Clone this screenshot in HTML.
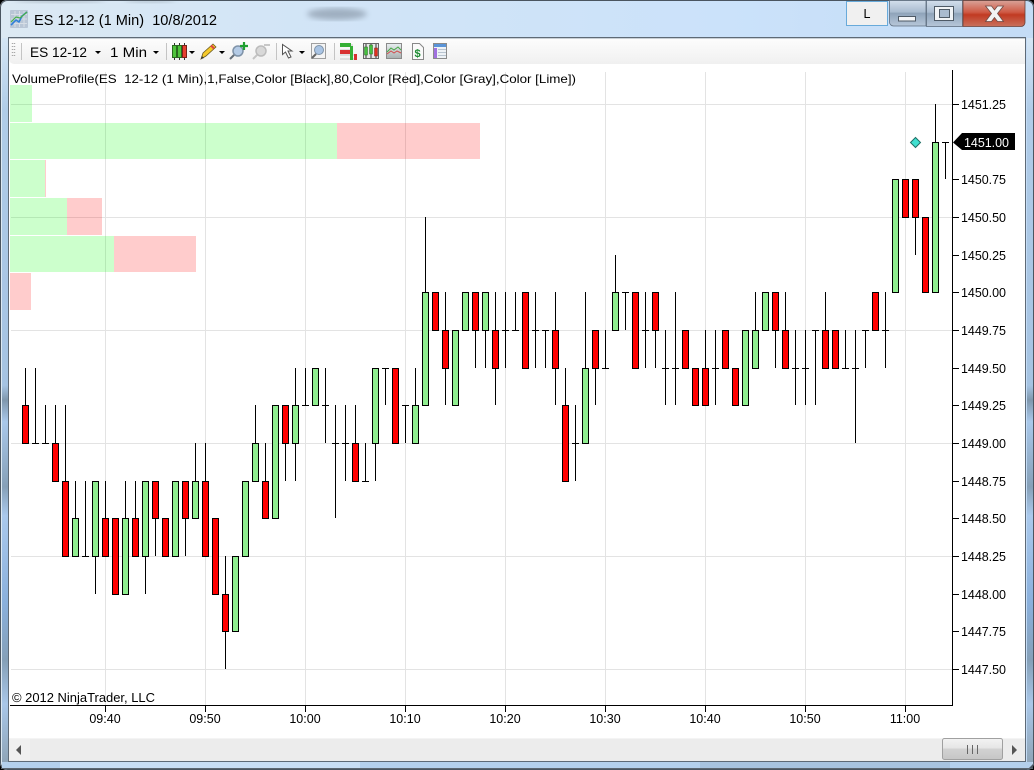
<!DOCTYPE html>
<html><head><meta charset="utf-8"><title>ES 12-12 (1 Min) 10/8/2012</title>
<style>
html,body{margin:0;padding:0;background:#000;overflow:hidden}
svg{display:block;font-family:"Liberation Sans",sans-serif}
text{white-space:pre}
</style></head><body>
<svg width="1034" height="770" viewBox="0 0 1034 770" xmlns="http://www.w3.org/2000/svg">
<defs>
<linearGradient id="tb" x1="0" y1="0" x2="0" y2="1"><stop offset="0" stop-color="#fdfdfd"/><stop offset="1" stop-color="#f0f0f0"/></linearGradient>
<linearGradient id="aero" x1="0" y1="0" x2="1" y2="0"><stop offset="0" stop-color="#dce9f3"/><stop offset=".25" stop-color="#d3e5f6"/><stop offset=".7" stop-color="#cbe2fa"/><stop offset="1" stop-color="#c4dcf6"/></linearGradient>
<linearGradient id="side" x1="0" y1="0" x2="0" y2="1"><stop offset="0" stop-color="#d5e6f5"/><stop offset=".1" stop-color="#b0cce8"/><stop offset=".48" stop-color="#a5c3e2"/><stop offset=".5" stop-color="#7f97ad"/><stop offset=".53" stop-color="#a9c8ea"/><stop offset=".62" stop-color="#86a0b8"/><stop offset=".66" stop-color="#aac9ec"/><stop offset=".78" stop-color="#8ab0dc"/><stop offset=".86" stop-color="#85a0b8"/><stop offset=".92" stop-color="#a9c7e8"/><stop offset="1" stop-color="#8fa5b8"/></linearGradient>
<linearGradient id="min" x1="0" y1="0" x2="0" y2="1"><stop offset="0" stop-color="#d3dfec"/><stop offset=".45" stop-color="#a9bbcf"/><stop offset=".5" stop-color="#8fa4ba"/><stop offset="1" stop-color="#b7c7d9"/></linearGradient>
<linearGradient id="cls" x1="0" y1="0" x2="0" y2="1"><stop offset="0" stop-color="#d9a298"/><stop offset=".45" stop-color="#cf5a45"/><stop offset=".55" stop-color="#c13a22"/><stop offset="1" stop-color="#c9705c"/></linearGradient>
<linearGradient id="thumb" x1="0" y1="0" x2="0" y2="1"><stop offset="0" stop-color="#f3f3f3"/><stop offset=".45" stop-color="#e6e6e6"/><stop offset=".5" stop-color="#d2d2d2"/><stop offset="1" stop-color="#c6c6c6"/></linearGradient>
<linearGradient id="gicon" x1="0" y1="0" x2="0" y2="1"><stop offset="0" stop-color="#e8eef0"/><stop offset="1" stop-color="#a8b0b0"/></linearGradient>
<filter id="blur"><feGaussianBlur stdDeviation="3"/></filter>
</defs>

<!-- window frame -->
<rect x="0" y="0" width="1034" height="770" rx="7" fill="url(#aero)"/>
<rect x="0.5" y="0.5" width="1033" height="769" rx="7" fill="none" stroke="#4a5560"/>
<rect x="2" y="38" width="6" height="724" fill="url(#side)"/>
<rect x="1027" y="38" width="6" height="724" fill="url(#side)"/>
<rect x="2" y="762" width="1030" height="6" fill="#b4d0ec"/>
<rect x="60" y="762" width="300" height="6" fill="#c8def4"/>
<rect x="700" y="762" width="250" height="6" fill="#a8c4e0"/>
<rect x="1" y="768" width="1032" height="1" fill="#5c6670"/>
<ellipse cx="337" cy="14" rx="30" ry="6" fill="#5a6676" opacity=".42" filter="url(#blur)"/>
<ellipse cx="60" cy="1" rx="45" ry="2" fill="#6a7680" opacity=".4" filter="url(#blur)"/>
<ellipse cx="150" cy="1" rx="25" ry="2" fill="#6a7680" opacity=".35" filter="url(#blur)"/>

<!-- title icon -->
<rect x="10" y="10" width="18" height="18" rx="1" fill="#b9c6d6"/>
<path d="M11 14.5h16M11 19h16M11 23.5h16M15 11v16M19.500 11v16M24 11v16" stroke="#d7dee6" stroke-width="1" fill="none"/>
<path d="M11 25l5-5 3 2 3-6 5-4" stroke="#2f7fd8" stroke-width="1.600" fill="none"/>
<path d="M11 22l5-5 4 1 7-6" stroke="#48b048" stroke-width="1.200" fill="none"/>
<text x="34" y="25" font-size="14.500" fill="#000" textLength="183" lengthAdjust="spacingAndGlyphs">ES 12-12 (1 Min)  10/8/2012</text>

<!-- caption buttons -->
<rect x="846.500" y="1.500" width="41" height="24" fill="#f0f0f0" stroke="#5fc9e8"/>
<rect x="846.500" y="1.500" width="41" height="24" fill="none" stroke="#7a70c0" stroke-opacity=".35"/>
<text x="867" y="18" font-size="12.500" text-anchor="middle" fill="#000">L</text>
<path d="M889.500 0.500V22a4 4 0 0 0 4 4H926V0.500z" fill="url(#min)" stroke="#5f6f80" stroke-width=".8"/>
<rect x="898.500" y="16.500" width="17" height="4.500" fill="#f4f6f8" stroke="#4e5a66"/>
<rect x="926.500" y="0.500" width="36" height="26" fill="url(#min)" stroke="#5f6f80" stroke-width=".8"/>
<rect x="934.500" y="6.500" width="19" height="14" fill="#f0f3f6" stroke="#4e5a66"/>
<rect x="939.500" y="9.500" width="10" height="8" fill="#a9bbcf" stroke="#4e5a66"/>
<path d="M963 0.500V26.500H1021a4 4 0 0 0 4-4V0.500z" fill="url(#cls)" stroke="#6a4038" stroke-width=".8"/>
<path d="M985.500 6h6l3 4 3-4h6l-6 7.500 6 8h-6l-3-4-3 4h-6l6-8z" fill="#f2f2f2" stroke="#6f4a44" stroke-width=".8"/>

<!-- client -->
<rect x="8.500" y="37.500" width="1017" height="724" fill="#fff" stroke="#5e6a76"/>
<path d="M9 38H1025V64H14a5 5 0 0 1-5-5z" fill="url(#tb)"/>
<path d="M9 38.500H1025" stroke="#c9d0d6"/>

<!-- toolbar -->
<path d="M12.500 43v1M12.500 46v1M12.500 49v1M12.500 52v1M12.500 55v1M14.500 43v1M14.500 46v1M14.500 49v1M14.500 52v1M14.500 55v1" stroke="#a8a8a8" stroke-width="1.400"/>
<path d="M21.500 43V60M166.500 43V60M276.500 43V60M334.500 43V60" stroke="#c4c4c4"/>
<text x="30" y="57" font-size="14" fill="#000" textLength="57" lengthAdjust="spacingAndGlyphs">ES 12-12</text>
<path d="M95 51h6l-3 3z" fill="#000"/>
<text x="110" y="57" font-size="14" fill="#000" textLength="37" lengthAdjust="spacingAndGlyphs">1 Min</text>
<path d="M153 51h6l-3 3z" fill="#000"/>

<!-- candle icon -->
<path d="M174.500 43v17M179.500 43v17M184.500 43v17" stroke="#333"/>
<rect x="172.500" y="45.500" width="4" height="12" fill="#4fc43c" stroke="#2a6a20"/>
<rect x="177.500" y="45.500" width="4" height="12" fill="#4fc43c" stroke="#2a6a20"/>
<rect x="182.500" y="45.500" width="4" height="12" fill="#e64030" stroke="#7a2218"/>
<path d="M189 51h6l-3 3z" fill="#000"/>
<!-- pencil -->
<path d="M201 59l2-6 10-9 3 3-10 9z" fill="#f5c92a" stroke="#6a5a20" stroke-width=".8"/>
<path d="M211 45.500l3 3" stroke="#d44" stroke-width="2"/>
<path d="M201 59l1-3 2 2z" fill="#333"/>
<path d="M219 51h6l-3 3z" fill="#000"/>
<!-- magnifier + -->
<circle cx="238" cy="51" r="5" fill="#b4cbe6" stroke="#7f93a8" stroke-width="1.500"/>
<path d="M234 55l-4 4" stroke="#66707a" stroke-width="2"/>
<path d="M244 42v8M240 46h8" stroke="#1fa030" stroke-width="2.200"/>
<!-- magnifier grey -->
<circle cx="261" cy="51" r="5" fill="#d8d8d8" stroke="#bcbcbc" stroke-width="1.500"/>
<path d="M257 55l-4 4" stroke="#c4c4c4" stroke-width="2"/>
<path d="M264 45h6" stroke="#c8c8c8" stroke-width="2"/>
<!-- arrow cursor -->
<path d="M282.500 44.500v10l3-2.500 3 6 2.500-1-3-6h4z" fill="#fff" stroke="#555"/>
<path d="M299 51h6l-3 3z" fill="#000"/>
<!-- boxed magnifier -->
<rect x="311.500" y="43.500" width="14" height="15" fill="#f4f4f4" stroke="#a0a0a0"/>
<circle cx="319" cy="50" r="4.500" fill="#a9c4e4" stroke="#7f93a8"/>
<path d="M316 54l-4 4" stroke="#666" stroke-width="2"/>
<!-- icon 1 -->
<path d="M340 45h13M340 50h10M340 55h16M340 59h16" stroke="#c8c8c8"/>
<rect x="340" y="43" width="11" height="4" fill="#35b035"/>
<rect x="340" y="50" width="10" height="4" fill="#d83030"/>
<rect x="350" y="46" width="3" height="14" fill="#35b035"/>
<rect x="354" y="54" width="3" height="6" fill="#d83030"/>
<!-- icon 2 -->
<rect x="363.500" y="43.500" width="15" height="15" fill="#e8e8e8" stroke="#666"/>
<path d="M366 44v14M371 44v14M376 44v14" stroke="#333"/>
<rect x="364.500" y="47" width="3" height="8" fill="#46c040" stroke="#2a6a20" stroke-width=".5"/>
<rect x="369.500" y="45" width="3" height="9" fill="#46c040" stroke="#2a6a20" stroke-width=".5"/>
<rect x="374.500" y="48" width="3" height="8" fill="#e03020" stroke="#7a2218" stroke-width=".5"/>
<!-- icon 3 -->
<rect x="386.500" y="43.500" width="15" height="15" fill="url(#gicon)" stroke="#8a8a8a"/>
<path d="M387 52l4-4 3 2 4-3 3 3" stroke="#45a845" fill="none"/>
<path d="M387 54l4-3 3 2 3-2 4 2" stroke="#d05050" fill="none"/>
<!-- icon 4 -->
<path d="M412.500 43.500h7l4 4v12h-11z" fill="#fafafa" stroke="#888"/>
<text x="417.500" y="57" font-size="11" font-weight="bold" text-anchor="middle" fill="#1a8a30">$</text>
<!-- icon 5 -->
<rect x="433.500" y="43.500" width="13" height="15" fill="#eef2f6" stroke="#8a8a8a"/>
<rect x="434" y="44" width="12" height="3" fill="#5a94d8"/>
<rect x="434" y="48" width="3" height="10" fill="#a070e0"/>
<path d="M438 49.500h8M438 52.500h8M438 55.500h8" stroke="#b8c4d0"/>

<!-- grid -->
<path d="M105.500 72V705M205.500 72V705M305.500 72V705M405.500 72V705M505.500 72V705M605.500 72V705M705.500 72V705M805.500 72V705M905.500 72V705" stroke="#e3e3e3"/>
<path d="M11 104.500H952M11 217.500H952M11 330.500H952M11 443.500H952M11 556.500H952M11 669.500H952" stroke="#e3e3e3"/>

<!-- volume profile -->
<g fill-opacity=".2">
<rect x="10" y="85" width="22" height="37" fill="#0f0"/>
<rect x="10" y="123" width="327" height="36" fill="#0f0"/>
<rect x="337" y="123" width="143" height="36" fill="#f00"/>
<rect x="10" y="160" width="35" height="37" fill="#0f0"/>
<rect x="45" y="160" width="1" height="37" fill="#f00"/>
<rect x="10" y="198" width="57" height="37" fill="#0f0"/>
<rect x="67" y="198" width="35" height="37" fill="#f00"/>
<rect x="10" y="236" width="104" height="36" fill="#0f0"/>
<rect x="114" y="236" width="82" height="36" fill="#f00"/>
<rect x="10" y="273" width="21" height="37" fill="#f00"/>
</g>

<!-- wicks -->
<path stroke="#000" stroke-width="1" fill="none" d="M25.500 368V406M35.500 368V444M45.500 405V444M55.500 405V444M65.500 405V482M75.500 481V519M85.500 481V557M95.500 556V594M105.500 481V519M125.500 481V519M135.500 481V519M145.500 556V594M155.500 518V556M185.500 518V556M195.500 443V482M205.500 443V482M225.500 556V669M255.500 405V444M265.500 443V482M285.500 443V481M295.500 368V481M305.500 368V406M325.500 368V443M335.500 405V518M345.500 405V481M355.500 405V444M365.500 443V482M375.500 443V481M385.500 368V405M405.500 405V443M415.500 368V406M425.500 217V293M445.500 292V405M475.500 330V368M485.500 330V368M495.500 292V405M505.500 292V368M515.500 292V331M535.500 292V368M545.500 330V368M555.500 292V405M565.500 368V406M575.500 405V481M585.500 292V369M595.500 368V405M605.500 330V369M615.500 255V293M625.500 292V330M645.500 292V368M655.500 330V368M665.500 330V405M675.500 292V405M705.500 330V369M715.500 330V405M755.500 292V331M775.500 330V368M785.500 292V331M795.500 330V405M805.500 330V405M815.500 330V405M825.500 292V331M845.500 330V369M855.500 330V443M865.500 330V368M885.500 292V368M915.500 217V255M935.500 104V143M945.500 142V179"/>
<!-- doji ticks -->
<path stroke="#000" stroke-width="1" fill="none" d="M32 443.500h7M42 443.500h7M82 556.500h7M302 405.500h7M322 405.500h7M332 443.500h7M342 443.500h7M362 481.500h7M382 368.500h7M402 405.500h7M502 330.500h7M512 330.500h7M532 330.500h7M542 330.500h7M572 443.500h7M602 368.500h7M622 292.500h7M642 330.500h7M662 368.500h7M672 368.500h7M712 368.500h7M792 368.500h7M802 368.500h7M812 330.500h7M842 368.500h7M852 368.500h7M862 330.500h7M882 330.500h7M942 142.500h7"/>
<!-- green bodies -->
<path fill="#90ee90" stroke="#000" d="M72.500 518.500h6v38h-6zM92.500 481.500h6v75h-6zM122.500 518.500h6v76h-6zM142.500 481.500h6v75h-6zM172.500 481.500h6v75h-6zM192.500 481.500h6v37h-6zM232.500 556.500h6v75h-6zM242.500 481.500h6v75h-6zM252.500 443.500h6v38h-6zM272.500 405.500h6v113h-6zM292.500 405.500h6v38h-6zM312.500 368.500h6v37h-6zM372.500 368.500h6v75h-6zM412.500 405.500h6v38h-6zM422.500 292.500h6v113h-6zM452.500 330.500h6v75h-6zM462.500 292.500h6v38h-6zM482.500 292.500h6v38h-6zM582.500 368.500h6v75h-6zM612.500 292.500h6v38h-6zM742.500 330.500h6v75h-6zM752.500 330.500h6v38h-6zM762.500 292.500h6v38h-6zM892.500 179.500h6v113h-6zM932.500 142.500h6v150h-6z"/>
<!-- red bodies -->
<path fill="#ff0000" stroke="#000" d="M22.500 405.500h6v38h-6zM52.500 443.500h6v38h-6zM62.500 481.500h6v75h-6zM102.500 518.500h6v38h-6zM112.500 518.500h6v76h-6zM132.500 518.500h6v38h-6zM152.500 481.500h6v37h-6zM162.500 518.500h6v38h-6zM182.500 481.500h6v37h-6zM202.500 481.500h6v75h-6zM212.500 518.500h6v76h-6zM222.500 594.500h6v37h-6zM262.500 481.500h6v37h-6zM282.500 405.500h6v38h-6zM352.500 443.500h6v38h-6zM392.500 368.500h6v75h-6zM432.500 292.500h6v38h-6zM442.500 330.500h6v38h-6zM472.500 292.500h6v38h-6zM492.500 330.500h6v38h-6zM522.500 292.500h6v76h-6zM552.500 330.500h6v38h-6zM562.500 405.500h6v76h-6zM592.500 330.500h6v38h-6zM632.500 292.500h6v76h-6zM652.500 292.500h6v38h-6zM682.500 330.500h6v38h-6zM692.500 368.500h6v37h-6zM702.500 368.500h6v37h-6zM722.500 330.500h6v38h-6zM732.500 368.500h6v37h-6zM772.500 292.500h6v38h-6zM782.500 330.500h6v38h-6zM822.500 330.500h6v38h-6zM832.500 330.500h6v38h-6zM872.500 292.500h6v38h-6zM902.500 179.500h6v38h-6zM912.500 179.500h6v38h-6zM922.500 217.500h6v75h-6z"/>

<!-- diamond -->
<path d="M915.500 137.500l5 5-5 5-5-5z" fill="#40e0d0" stroke="#1f6f66"/>

<!-- axes -->
<path d="M952.500 70V706M10 705.500H953" stroke="#000"/>
<path stroke="#000" d="M952 104.500h7M952 179.500h7M952 217.500h7M952 255.500h7M952 292.500h7M952 330.500h7M952 368.500h7M952 405.500h7M952 443.500h7M952 481.500h7M952 518.500h7M952 556.500h7M952 594.500h7M952 631.500h7M952 669.500h7M105.500 705v7M205.500 705v7M305.500 705v7M405.500 705v7M505.500 705v7M605.500 705v7M705.500 705v7M805.500 705v7M905.500 705v7"/>

<!-- price labels -->
<g font-size="12.500" fill="#000">
<text x="961" y="109" textLength="45">1451.25</text>
<text x="961" y="184" textLength="45">1450.75</text>
<text x="961" y="222" textLength="45">1450.50</text>
<text x="961" y="260" textLength="45">1450.25</text>
<text x="961" y="297" textLength="45">1450.00</text>
<text x="961" y="335" textLength="45">1449.75</text>
<text x="961" y="373" textLength="45">1449.50</text>
<text x="961" y="410" textLength="45">1449.25</text>
<text x="961" y="448" textLength="45">1449.00</text>
<text x="961" y="486" textLength="45">1448.75</text>
<text x="961" y="523" textLength="45">1448.50</text>
<text x="961" y="561" textLength="45">1448.25</text>
<text x="961" y="599" textLength="45">1448.00</text>
<text x="961" y="636" textLength="45">1447.75</text>
<text x="961" y="674" textLength="45">1447.50</text>
</g>
<path d="M953 142.500L962 133H1015V150H962z" fill="#000"/>
<text x="964" y="147" font-size="12.500" fill="#fff" textLength="45">1451.00</text>

<!-- time labels -->
<g font-size="12.500" fill="#000" text-anchor="middle">
<text x="105" y="723">09:40</text>
<text x="205" y="723">09:50</text>
<text x="305" y="723">10:00</text>
<text x="405" y="723">10:10</text>
<text x="505" y="723">10:20</text>
<text x="605" y="723">10:30</text>
<text x="705" y="723">10:40</text>
<text x="805" y="723">10:50</text>
<text x="905" y="723">11:00</text>
</g>

<!-- chart labels -->
<text x="12" y="83" font-size="12" fill="#000" textLength="564" lengthAdjust="spacingAndGlyphs">VolumeProfile(ES  12-12 (1 Min),1,False,Color [Black],80,Color [Red],Color [Gray],Color [Lime])</text>
<text x="12" y="702" font-size="12.500" fill="#000" textLength="143" lengthAdjust="spacingAndGlyphs">© 2012 NinjaTrader, LLC</text>

<!-- scrollbar -->
<rect x="9" y="738" width="1016" height="23" fill="#ececec"/>
<path d="M9 738.500H1025" stroke="#f4f4f4"/>
<rect x="9" y="739" width="21" height="21" fill="#f0f0f0"/>
<path d="M21 745v10l-5-5z" fill="#555"/>
<rect x="942.500" y="738.500" width="60" height="21" rx="2" fill="url(#thumb)" stroke="#a0a0a0"/>
<path d="M967.500 745v9M972.500 745v9M977.500 745v9" stroke="#666"/>
<path d="M1012 745v10l5-5z" fill="#555"/>
<path d="M1029 768l4-4v4z" fill="#4a5560"/>
</svg>
</body></html>
